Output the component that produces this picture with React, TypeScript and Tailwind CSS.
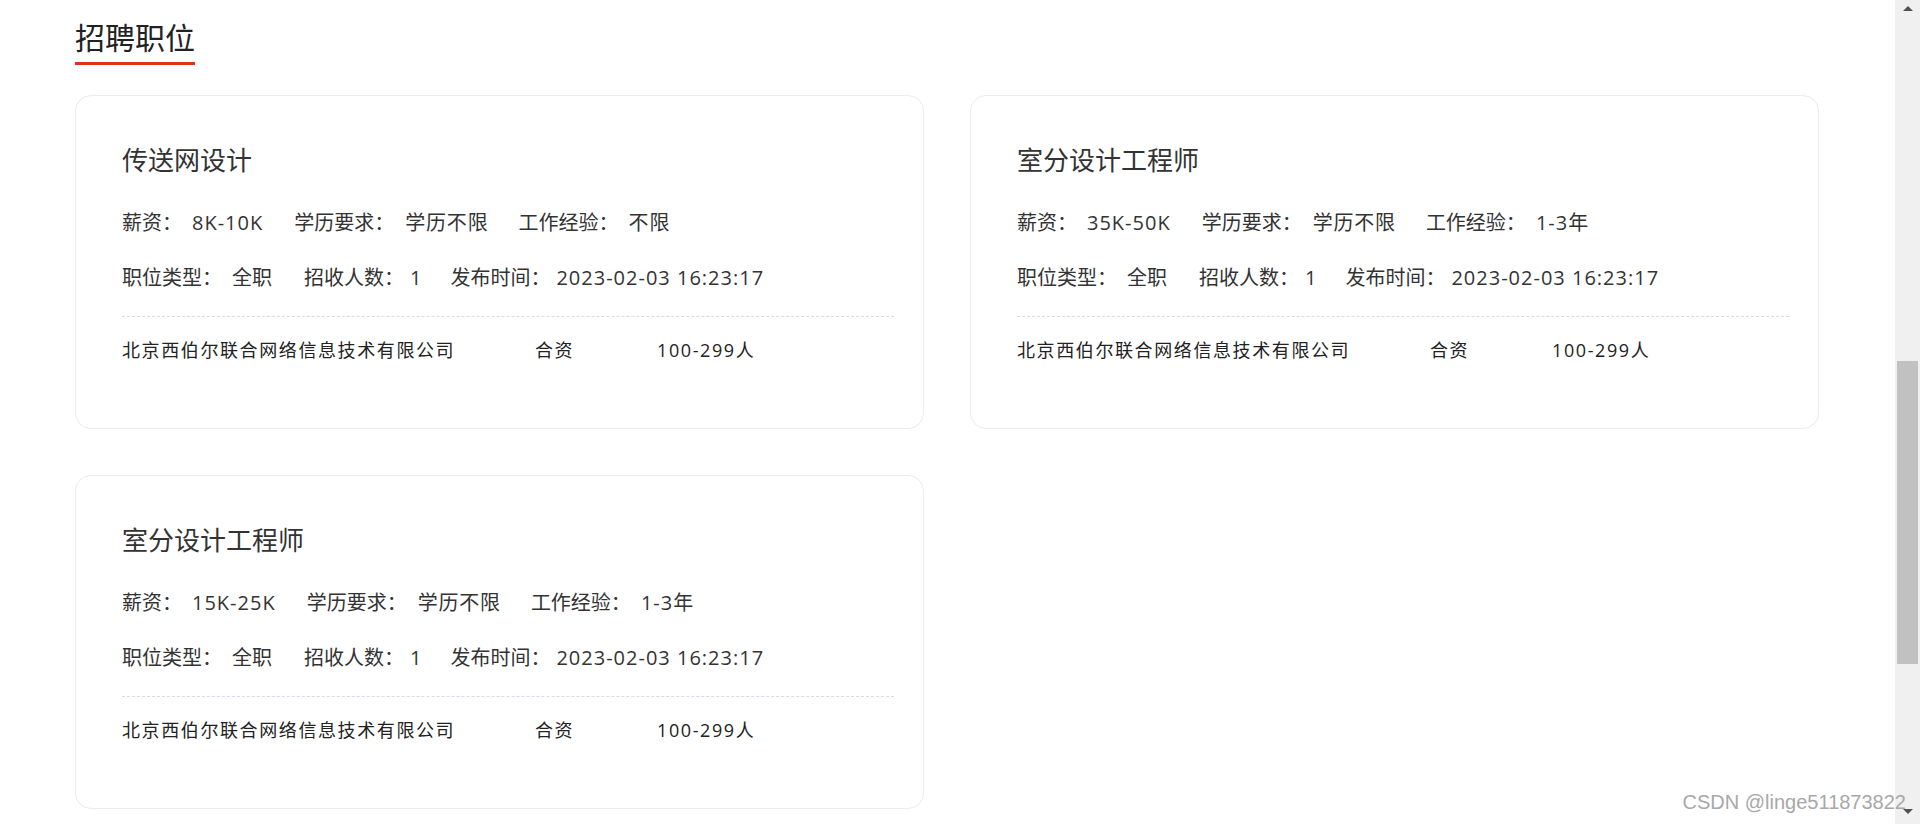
type Job = {
  title: string;
  salary: string;
  education: string;
  experience: string;
  type: string;
  count: number;
  time: string;
  company: string;
  nature: string;
  scale: string;
};

const jobs: Job[] = [
  {
    title: "传送网设计",
    salary: "8K-10K",
    education: "学历不限",
    experience: "不限",
    type: "全职",
    count: 1,
    time: "2023-02-03 16:23:17",
    company: "北京西伯尔联合网络信息技术有限公司",
    nature: "合资",
    scale: "100-299人",
  },
  {
    title: "室分设计工程师",
    salary: "35K-50K",
    education: "学历不限",
    experience: "1-3年",
    type: "全职",
    count: 1,
    time: "2023-02-03 16:23:17",
    company: "北京西伯尔联合网络信息技术有限公司",
    nature: "合资",
    scale: "100-299人",
  },
  {
    title: "室分设计工程师",
    salary: "15K-25K",
    education: "学历不限",
    experience: "1-3年",
    type: "全职",
    count: 1,
    time: "2023-02-03 16:23:17",
    company: "北京西伯尔联合网络信息技术有限公司",
    nature: "合资",
    scale: "100-299人",
  },
];

const JobCard = ({ job }: { job: Job }) => {
  return (
    <div className="h-[334px] rounded-[16px] border border-[#ebebf0] bg-white pl-[46px] pr-[29px] pt-[44px] text-[#333]">
      <h3 className="text-[26px] leading-[40px]">{job.title}</h3>
      <div className="mt-[28px] flex text-[20px] leading-[30px]">
        <span className="mr-[31px]">
          薪资：<span className="ml-[10px] tracking-[1px]">{job.salary}</span>
        </span>
        <span className="mr-[30px]">
          学历要求：<span className="ml-[11px] tracking-[0.8px]">{job.education}</span>
        </span>
        <span>
          工作经验：
          <span className="ml-[10px] tracking-[1px]">{job.experience}</span>
        </span>
      </div>
      <div className="mt-[25px] flex text-[20px] leading-[30px]">
        <span className="mr-[32px]">
          职位类型：<span className="ml-[10px]">{job.type}</span>
        </span>
        <span className="mr-[29px]">
          招收人数：<span className="ml-[6px]">{job.count}</span>
        </span>
        <span>
          发布时间：<span className="ml-[6px] tracking-[1px]">{job.time}</span>
        </span>
      </div>
      <div className="mt-[23px] border-t border-dashed border-[#d6dbf2]" />
      <div className="mt-[18px] flex text-[18px] leading-[30px] tracking-[1.6px] text-[#222]">
        <span className="w-[413px]">{job.company}</span>
        <span className="w-[122px]">{job.nature}</span>
        <span>{job.scale}</span>
      </div>
    </div>
  );
};

const Scrollbar = () => {
  return (
    <div className="flex w-[25px] flex-col items-center bg-[#f0f0f0]">
      <div className="mt-[6px] h-0 w-0 border-x-[5px] border-b-[5px] border-x-transparent border-b-[#505050]" />
      <div className="mt-[350px] h-[303px] w-[21px] bg-[#c1c1c1]" />
      <div className="mt-auto mb-[10px] h-0 w-0 border-x-[5px] border-t-[5px] border-x-transparent border-t-[#505050]" />
    </div>
  );
};

export default function App() {
  return (
    <div
      className="relative flex h-[824px] w-[1920px] overflow-hidden bg-white"
      style={{ fontFamily: '"Open Sans", "Noto Sans CJK SC", sans-serif' }}
    >
      <main className="flex-1 pl-[75px]">
        <div className="w-[1744px]">
          <h2 className="mt-[18px] inline-block border-b-[3px] border-[#e0301e] pb-[4px] text-[30px] leading-[40px] text-[#222]">
            招聘职位
          </h2>
          <div className="mt-[30px] grid grid-cols-2 gap-[46px]">
            {jobs.map((job, i) => (
              <JobCard key={i} job={job} />
            ))}
          </div>
        </div>
      </main>
      <Scrollbar />
      <div
        className="absolute bottom-[12px] right-[14px] text-[20px] leading-[20px] text-[#a8a8a8]"
        style={{ fontFamily: '"Liberation Sans", Arial, sans-serif' }}
      >
        CSDN @linge511873822
      </div>
    </div>
  );
}
